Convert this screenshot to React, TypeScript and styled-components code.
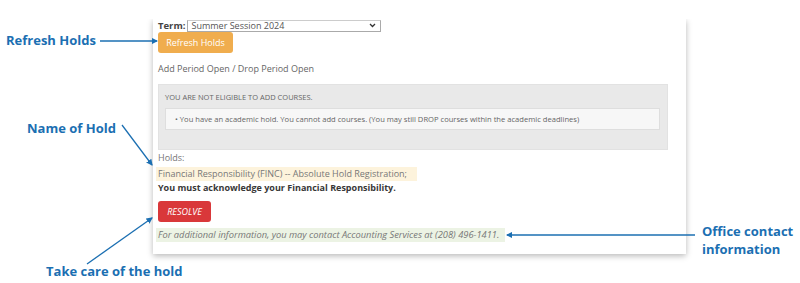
import React from "react";
import styled, { createGlobalStyle } from "styled-components";

const GlobalStyle = createGlobalStyle`
  html, body { margin: 0; padding: 0; background: #fff; }
  body { font-family: "Open Sans", "Liberation Sans", sans-serif; }
`;

const Stage = styled.div`
  position: relative;
  width: 800px;
  height: 283px;
  overflow: hidden;
  background: #fff;
`;

const Card = styled.div`
  margin: 19px 0 0 153px;
  width: 533px;
  box-sizing: border-box;
  padding: 0 18px 12px 5px;
  background: #fff;
  box-shadow: 0 2px 6px rgba(0, 0, 0, 0.28);
  clip-path: inset(0 -10px -10px -10px);
  color: #666;
  font-size: 9px;
`;

const TermRow = styled.div`
  display: flex;
  align-items: center;
  gap: 2px;
  height: 13px;
  font-size: 9.5px;
  color: #444;
  b { font-weight: 700; }
`;

const Select = styled.div`
  width: 194px;
  height: 12px;
  box-sizing: border-box;
  border: 1px solid #aaa;
  border-top-color: #ccc;
  display: flex;
  align-items: center;
  justify-content: space-between;
  padding: 0 4px 0 3px;
  font-size: 9px;
  color: #555;
  svg { display: block; }
`;

const Button = styled.div<{ $bg: string; $italic?: boolean; $w: number }>`
  width: ${(p) => p.$w}px;
  height: 21px;
  border-radius: 3px;
  background: ${(p) => p.$bg};
  color: #fff;
  font-size: 9px;
  font-style: ${(p) => (p.$italic ? "italic" : "normal")};
  display: flex;
  align-items: center;
  justify-content: center;
`;

const Line = styled.div<{ $top: number; $color?: string; $bold?: boolean; $size?: number }>`
  margin-top: ${(p) => p.$top}px;
  height: 13px;
  line-height: 13px;
  font-size: ${(p) => p.$size ?? 9}px;
  color: ${(p) => p.$color ?? "#666"};
  font-weight: ${(p) => (p.$bold ? 700 : 400)};
  white-space: nowrap;
`;

const Alert = styled.div`
  margin-top: 9px;
  height: 66px;
  box-sizing: border-box;
  background: #e9e9e9;
  border: 1px solid #e2e2e2;
  padding: 6px 7px 0 6px;
`;

const AlertTitle = styled.div`
  font-size: 7.5px;
  color: #666;
  height: 12px;
  line-height: 12px;
  text-transform: uppercase;
`;

const AlertBody = styled.div`
  margin-top: 5px;
  height: 22px;
  box-sizing: border-box;
  background: #f7f7f7;
  border: 1px solid #dedede;
  padding-left: 9px;
  display: flex;
  align-items: center;
  font-size: 7.6px;
  color: #666;
`;

const Highlight = styled.div<{ $top: number; $bg: string; $w: number; $italic?: boolean; $size?: number }>`
  margin: ${(p) => p.$top}px 0 0 -2px;
  width: ${(p) => p.$w}px;
  height: 14px;
  line-height: 14px;
  padding-left: 2px;
  box-sizing: border-box;
  background: ${(p) => p.$bg};
  font-size: ${(p) => p.$size ?? 9}px;
  color: #777;
  font-style: ${(p) => (p.$italic ? "italic" : "normal")};
  white-space: nowrap;
`;

const Spacer = styled.div<{ $h: number }>`
  height: ${(p) => p.$h}px;
`;

const Callout = styled.div<{ $x: number; $y: number }>`
  position: absolute;
  left: ${(p) => p.$x}px;
  top: ${(p) => p.$y}px;
  font-family: "Open Sans", "Liberation Sans", sans-serif;
  font-weight: 700;
  font-size: 13px;
  line-height: 18px;
  color: #1b6fb2;
  white-space: nowrap;
`;

const Arrows = styled.svg`
  position: absolute;
  left: 0;
  top: 0;
  pointer-events: none;
`;

export default function App() {
  const blue = "#1b6fb2";
  return (
    <Stage>
      <GlobalStyle />
      <Card>
        <TermRow>
          <b>Term:</b>
          <Select>
            <span>Summer Session 2024</span>
            <svg width="7" height="5" viewBox="0 0 7 5">
              <path d="M1 1l2.5 2.5L6 1" fill="none" stroke="#333" strokeWidth="1.3" />
            </svg>
          </Select>
        </TermRow>
        <Button $bg="#f0ad4e" $w={75}>Refresh Holds</Button>
        <Line $top={9} $color="#666">Add Period Open / Drop Period Open</Line>
        <Alert>
          <AlertTitle>You are not eligible to add courses.</AlertTitle>
          <AlertBody>
            • You have an academic hold. You cannot add courses. (You may still DROP courses within the academic deadlines)
          </AlertBody>
        </Alert>
        <Line $top={1} $color="#777">Holds:</Line>
        <Highlight $top={3} $bg="#fdf3dc" $w={261}>
          Financial Responsibility (FINC) -- Absolute Hold Registration;
        </Highlight>
        <Line $top={0} $color="#383838" $bold>You must acknowledge your Financial Responsibility.</Line>
        <Spacer $h={7} />
        <Button $bg="#d9383a" $italic $w={53}>RESOLVE</Button>
        <Highlight $top={6} $bg="#ecf3e4" $w={349} $italic $size={9.3}>
          For additional information, you may contact Accounting Services at (208) 496-1411.
        </Highlight>
      </Card>

      <Callout $x={6} $y={31}>Refresh Holds</Callout>
      <Callout $x={27} $y={119}>Name of Hold</Callout>
      <Callout $x={46} $y={262}>Take care of the hold</Callout>
      <Callout $x={702} $y={222}>Office contact<br />information</Callout>

      <Arrows width="800" height="283" viewBox="0 0 800 283">
        <defs>
          <marker id="ah" viewBox="0 0 6 6" refX="5" refY="3" markerWidth="5" markerHeight="5" orient="auto">
            <path d="M0 0L6 3L0 6z" fill={blue} />
          </marker>
        </defs>
        <g stroke={blue} strokeWidth="1.3" fill="none" markerEnd="url(#ah)">
          <line x1="100" y1="41" x2="157" y2="41" />
          <line x1="122" y1="125" x2="152" y2="165" />
          <line x1="87" y1="264" x2="152" y2="218" />
          <line x1="695" y1="235" x2="507" y2="235" />
        </g>
      </Arrows>
    </Stage>
  );
}
